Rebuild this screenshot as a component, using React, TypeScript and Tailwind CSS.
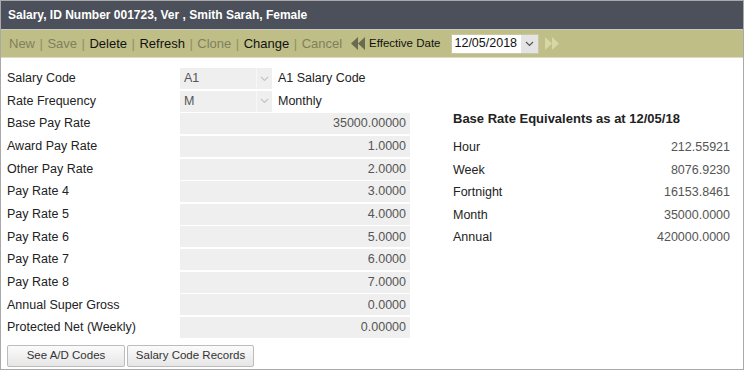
import React from "react";

const rows: { label: string; value: string }[] = [
  { label: "Base Pay Rate", value: "35000.00000" },
  { label: "Award Pay Rate", value: "1.0000" },
  { label: "Other Pay Rate", value: "2.0000" },
  { label: "Pay Rate 4", value: "3.0000" },
  { label: "Pay Rate 5", value: "4.0000" },
  { label: "Pay Rate 6", value: "5.0000" },
  { label: "Pay Rate 7", value: "6.0000" },
  { label: "Pay Rate 8", value: "7.0000" },
  { label: "Annual Super Gross", value: "0.0000" },
  { label: "Protected Net (Weekly)", value: "0.00000" },
];

const equivalents = [
  ["Hour", "212.55921"],
  ["Week", "8076.9230"],
  ["Fortnight", "16153.8461"],
  ["Month", "35000.0000"],
  ["Annual", "420000.0000"],
];

const tools: [string, boolean][] = [
  ["New", false],
  ["Save", false],
  ["Delete", true],
  ["Refresh", true],
  ["Clone", false],
  ["Change", true],
  ["Cancel", false],
];

function Chevron({ className }: { className?: string }) {
  return (
    <svg width="9" height="6" viewBox="0 0 9 6" className={className}>
      <path d="M1 1l3.5 3.5L8 1" fill="none" stroke="currentColor" strokeWidth="1.2" />
    </svg>
  );
}

function DoubleArrow({ dir, color }: { dir: "left" | "right"; color: string }) {
  const d =
    dir === "left"
      ? "M7 0L0 6.5 7 13zM14 0L7 6.5 14 13z"
      : "M0 0l7 6.5L0 13zM7 0l7 6.5L7 13z";
  return (
    <svg width="14" height="13" viewBox="0 0 14 13" className="block">
      <path d={d} fill={color} />
    </svg>
  );
}

function SelectBox({ value }: { value: string }) {
  return (
    <div className="flex h-full w-[92px] items-center bg-[#efefef] pl-1 text-[#555]">
      <span className="flex-1">{value}</span>
      <span className="flex h-full w-[16px] items-center justify-center border-l border-[#f7f7f7] text-[#c4c4c4]">
        <Chevron />
      </span>
    </div>
  );
}

export default function App() {
  return (
    <div
      className="h-[371px] w-[745px] bg-white text-[12.5px] text-[#222]"
      style={{ fontFamily: '"Liberation Sans", Arial, sans-serif' }}
    >
      <div className="flex h-[370px] w-[744px] flex-col border border-[#a9a9a9]">
        <div className="flex h-[29px] items-center border-b border-[#c9c9c9] bg-[#4b505a] px-[7px] text-[12px] font-bold text-white">
          Salary, ID Number 001723, Ver , Smith Sarah, Female
        </div>
        <div className="flex h-[28px] items-center border-b border-[#dcdcc4] bg-[#bfbe86] pl-[8px] text-[13px]">
          {tools.map(([name, active], i) => (
            <React.Fragment key={name}>
              <span className={active ? "text-[#111]" : "text-[#80805f]"}>{name}</span>
              {i < tools.length - 1 && <span className="mx-[4.5px] text-[#8f8f6a]">|</span>}
            </React.Fragment>
          ))}
          <span className="ml-[9px] flex items-center">
            <DoubleArrow dir="left" color="#6a6a4e" />
          </span>
          <span className="ml-[4px] text-[11.5px] text-[#111]">Effective Date</span>
          <div className="ml-[11px] flex h-[20px] w-[88px] items-center border border-[#c8c8a8] bg-white">
            <span className="flex-1 pl-[2px] text-[12.5px] text-[#111]">12/05/2018</span>
            <span className="flex h-full w-[17px] items-center justify-center bg-[#e4e4e4] text-[#555]">
              <Chevron />
            </span>
          </div>
          <span className="ml-[6px] flex items-center">
            <DoubleArrow dir="right" color="#d6d6a6" />
          </span>
        </div>

        <div className="flex flex-1 pt-[10px]">
          <div className="w-[410px] pl-[6px]">
            <div className="mb-[1.65px] flex h-[21px] items-center">
              <span className="w-[173px]">Salary Code</span>
              <SelectBox value="A1" />
              <span className="ml-[6px]">A1 Salary Code</span>
            </div>
            <div className="mb-[1.65px] flex h-[21px] items-center">
              <span className="w-[173px]">Rate Frequency</span>
              <SelectBox value="M" />
              <span className="ml-[6px]">Monthly</span>
            </div>
            {rows.map((r) => (
              <div key={r.label} className="mb-[1.65px] flex h-[21px] items-center">
                <span className="w-[173px]">{r.label}</span>
                <div className="flex h-full w-[230px] items-center justify-end bg-[#efefef] pr-[4px] text-[#555]">
                  {r.value}
                </div>
              </div>
            ))}
            <div className="mt-[7px] flex gap-[2px]">
              <button className="h-[22px] w-[118px] rounded-[2px] border border-[#bcbcbc] bg-gradient-to-b from-[#fbfbfb] to-[#e6e6e6] text-[11.5px] text-[#333]">
                See A/D Codes
              </button>
              <button className="h-[22px] w-[127px] rounded-[2px] border border-[#bcbcbc] bg-gradient-to-b from-[#fbfbfb] to-[#e6e6e6] text-[11.5px] text-[#333]">
                Salary Code Records
              </button>
            </div>
          </div>

          <div className="ml-[42px] w-[277px] pt-[41px]">
            <div className="mb-[7px] h-[20px] text-[13px] font-bold">Base Rate Equivalents as at 12/05/18</div>
            {equivalents.map(([k, v]) => (
              <div key={k} className="flex h-[22.6px] items-center justify-between">
                <span>{k}</span>
                <span className="text-[#555]">{v}</span>
              </div>
            ))}
          </div>
        </div>
      </div>
    </div>
  );
}
